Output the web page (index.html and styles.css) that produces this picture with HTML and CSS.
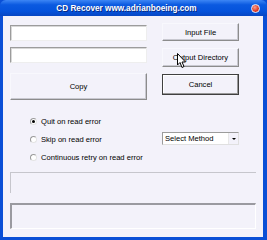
FILE: index.html
```html
<!DOCTYPE html>
<html lang="en">
<head>
    <meta charset="UTF-8">
    <title>CD Recover</title>
    <link rel="stylesheet" href="styles.css">
</head>
<body>
    <div class="window">
        <div class="titlebar">
            <span class="title">CD Recover www.adrianboeing.com</span>
            <span class="close"></span>
        </div>
        <div class="client">
            <div class="top">
                <div class="left">
                    <div class="field"></div>
                    <div class="field second"></div>
                    <div class="btn copy">Copy</div>
                </div>
                <div class="right">
                    <div class="btn input">Input File</div>
                    <div class="btn output">Output Directory</div>
                    <div class="btn cancel"><span>Cancel</span></div>
                </div>
            </div>
            <div class="middle">
                <div class="radios">
                    <label class="radio"><span class="dot checked"></span>Quit on read error</label>
                    <label class="radio"><span class="dot"></span>Skip on read error</label>
                    <label class="radio"><span class="dot"></span>Continuous retry on read error</label>
                </div>
                <div class="combo">
                    <span class="combo-text">Select Method</span>
                    <span class="combo-arrow"></span>
                </div>
            </div>
            <div class="panel status"></div>
            <div class="panel log"></div>
        </div>
        <svg class="cursor" width="10" height="16" viewBox="0 0 10 16">
            <path d="M0.5 0.5 L0.5 12 L3 9.5 L5 14.5 L7 13.5 L5 9 L8.5 9 Z" fill="#fff" stroke="#000" stroke-width="1"/>
        </svg>
    </div>
</body>
</html>
```

FILE: styles.css
```css
body {
    margin: 0;
    font-family: "Liberation Sans", Arial, sans-serif;
    font-size: 7.6px;
    color: #000;
}
.window {
    position: relative;
    width: 267px;
    height: 240px;
    box-sizing: border-box;
    background: #0a4fd6;
    padding: 0 4px 3px 3px;
    display: flex;
    flex-direction: column;
}
.titlebar {
    height: 16px;
    margin: 0 -4px 0 -3px;
    background: linear-gradient(#3d86f5, #0b5ae0 30%, #0553dc 70%, #0747c2);
    border-radius: 6px 6px 0 0;
    display: flex;
    align-items: center;
    padding: 0 7px 0 0;
}
.title {
    flex: 1;
    text-align: center;
    color: #fff;
    font-weight: bold;
    font-size: 8.2px;
    padding-left: 2px;
    text-shadow: 1px 1px 0 #0a2a80;
}
.close {
    width: 9px;
    height: 9px;
    border-radius: 50%;
    background: radial-gradient(circle at 40% 35%, #f6a090, #e0402a 55%, #b02010);
    border: 1px solid #e8eefc;
    box-sizing: border-box;
}
.client {
    flex: 1;
    background: #f3f2fa;
    padding: 0 7px 0 7px;
}
.top {
    display: grid;
    grid-template-columns: 137px 77px;
    column-gap: 15px;
    padding-top: 7px;
}
.left, .right {
    display: flex;
    flex-direction: column;
}
.field {
    height: 16px;
    margin-top: 2px;
    box-sizing: border-box;
    background: #fff;
    border: 1px solid;
    border-color: #9c9c9c #eeeeee #eeeeee #9c9c9c;
    box-shadow: inset 1px 1px 0 #d8d8d8;
}
.field.second {
    margin-top: 6px;
}
.btn {
    box-sizing: border-box;
    display: flex;
    align-items: center;
    justify-content: center;
    border: 1px solid;
    border-color: #f8f8fd #8c8c8c #8c8c8c #f8f8fd;
    box-shadow: inset -1px -1px 0 #c8c8d0;
}
.copy {
    height: 27px;
    margin-top: 10px;
    padding-bottom: 1px;
}
.input {
    height: 18px;
}
.output {
    height: 19px;
    margin-top: 7px;
}
.cancel {
    height: 21px;
    margin-top: 7px;
    border-color: #404040;
    box-shadow: inset -1px -1px 0 #9a9a9a, inset 1px 1px 0 #fff;
}
.middle {
    display: grid;
    grid-template-columns: 137px 77px;
    column-gap: 15px;
    margin-top: 12px;
}
.radios {
    display: flex;
    flex-direction: column;
    padding-left: 20px;
}
.radio {
    height: 18px;
    display: flex;
    align-items: center;
    white-space: nowrap;
}
.dot {
    width: 7px;
    height: 7px;
    box-sizing: border-box;
    border-radius: 50%;
    border: 1px solid;
    border-color: #9a9a9a #e4e4e4 #e4e4e4 #9a9a9a;
    background: #fff;
    margin-right: 4px;
    position: relative;
}
.dot.checked::after {
    content: "";
    position: absolute;
    left: 1px;
    top: 1px;
    width: 3px;
    height: 3px;
    border-radius: 50%;
    background: #000;
}
.combo {
    margin-top: 20px;
    height: 13px;
    box-sizing: border-box;
    background: #fff;
    border: 1px solid;
    border-color: #9c9c9c #e0e0e0 #e0e0e0 #9c9c9c;
    display: flex;
    align-items: center;
    padding-left: 2px;
}
.combo-text {
    flex: 1;
}
.combo-arrow {
    width: 9px;
    height: 11px;
    background: #f3f2fa;
    border-left: 1px solid #e8e8e8;
    display: flex;
    align-items: center;
    justify-content: center;
}
.combo-arrow::before {
    content: "";
    border-left: 2px solid transparent;
    border-right: 2px solid transparent;
    border-top: 2px solid #000;
}
.panel {
    box-sizing: border-box;
    width: 246px;
}
.status {
    height: 21px;
    margin-top: 6px;
    border-top: 1px solid #c6c6cc;
    border-left: 1px solid #c6c6cc;
}
.log {
    height: 26px;
    margin-top: 10px;
    border-top: 2px solid #9a9aa0;
    border-left: 2px solid #9a9aa0;
    border-bottom: 1px solid #fff;
    border-right: 1px solid #fff;
}
.cursor {
    position: absolute;
    left: 177px;
    top: 53px;
}
```
